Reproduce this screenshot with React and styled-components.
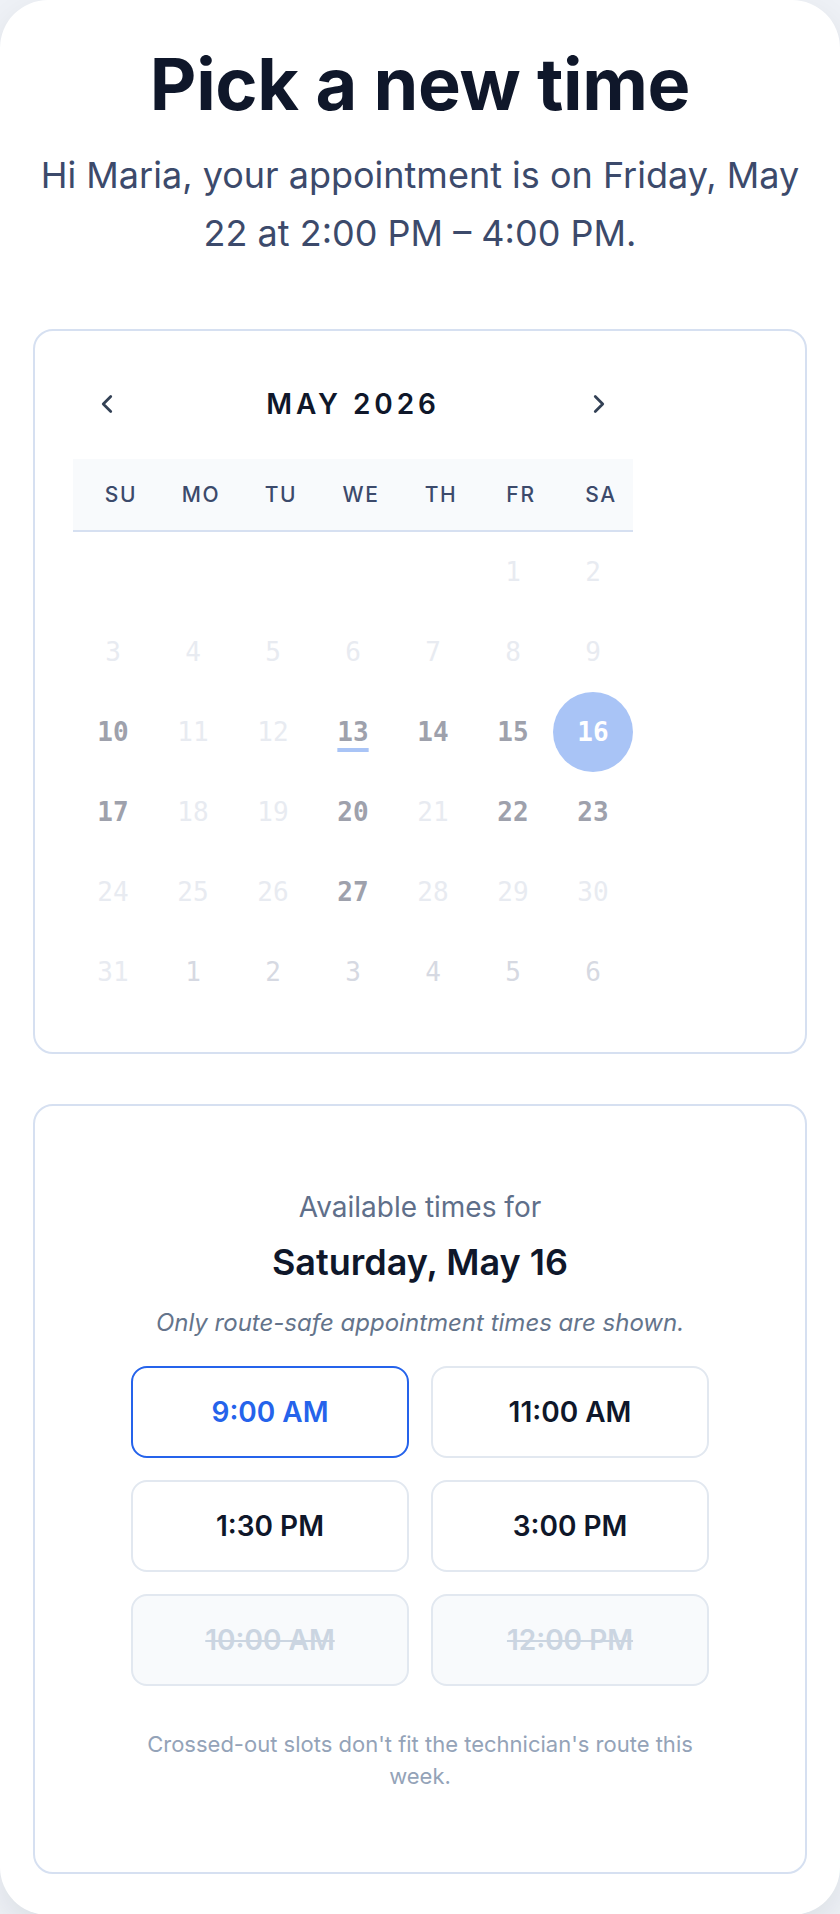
import React from 'react';
import styled, { createGlobalStyle, css } from 'styled-components';
import { ChevronLeft, ChevronRight } from 'lucide-react';

const GlobalStyle = createGlobalStyle`
  * { box-sizing: border-box; }
  body {
    margin: 0;
    background: #eef1f6;
    font-family: "Inter", "Noto Sans", sans-serif;
    -webkit-font-smoothing: antialiased;
  }
`;

const Page = styled.main`
  background: #ffffff;
  border-radius: 48px;
  padding: 44px 33px 41px;
  box-shadow: 0 12px 32px rgba(15, 23, 42, 0.08);
`;

const Title = styled.h1`
  margin: 0;
  text-align: center;
  font-size: 72px;
  line-height: 1.1;
  font-weight: 700;
  letter-spacing: -0.005em;
  color: #0f172a;
`;

const Lead = styled.p`
  margin: 23px 0 0;
  text-align: center;
  font-size: 36px;
  line-height: 58px;
  color: #3c4a6b;
`;

const Panel = styled.section`
  border: 2px solid #d6e0f1;
  border-radius: 20px;
  background: #ffffff;
  margin-top: ${(p) => p.$gap}px;
  padding: ${(p) => p.$pad};
`;

const Calendar = styled.div`
  width: 560px;
`;

const CalendarNav = styled.div`
  height: 70px;
  margin-bottom: 20px;
  display: flex;
  align-items: center;
  justify-content: space-between;
`;

const NavButton = styled.button`
  width: 68px;
  height: 68px;
  border: none;
  background: transparent;
  color: #334155;
  display: flex;
  align-items: center;
  justify-content: center;
  padding: 0;
  cursor: pointer;
`;

const MonthLabel = styled.div`
  font-size: 28px;
  font-weight: 600;
  letter-spacing: 0.14em;
  color: #0f172a;
`;

const WeekdayRow = styled.div`
  display: grid;
  grid-template-columns: repeat(7, 80px);
  height: 73px;
  background: #f8fafc;
  border-bottom: 2px solid #d6e0f1;
`;

const Weekday = styled.div`
  display: flex;
  align-items: center;
  justify-content: center;
  padding-left: 16px;
  font-size: 21px;
  font-weight: 500;
  letter-spacing: 0.08em;
  color: #3c4a6b;
`;

const DayGrid = styled.div`
  display: grid;
  grid-template-columns: repeat(7, 80px);
  grid-auto-rows: 80px;
`;

const dayColors = {
  open: css`
    color: #9ea1ac;
    font-weight: 700;
  `,
  closed: css`
    color: #e8ebf1;
  `,
  next: css`
    color: #d6d9e2;
  `,
  selected: css`
    color: #ffffff;
    font-weight: 700;
    background: #a9c4f6;
    border-radius: 50%;
  `,
  blank: css``,
};

const Day = styled.div`
  display: flex;
  align-items: center;
  justify-content: center;
  font-family: "DejaVu Sans Mono", monospace;
  font-size: 26px;
  ${(p) => dayColors[p.$state]}
  ${(p) =>
    p.$today &&
    css`
      text-decoration: underline;
      text-decoration-color: #a9c4f6;
      text-decoration-thickness: 4px;
      text-underline-offset: 7px;
    `}
`;

const TimesFor = styled.div`
  text-align: center;
  font-size: 28px;
  line-height: 39px;
  color: #5f6f8a;
`;

const DateHeading = styled.h2`
  margin: 13px 0 0;
  text-align: center;
  font-size: 36px;
  line-height: 44px;
  font-weight: 600;
  color: #0f172a;
`;

const Hint = styled.p`
  margin: 22px 0 0;
  text-align: center;
  font-size: 24px;
  line-height: 33px;
  font-style: italic;
  color: #64748b;
`;

const SlotGrid = styled.div`
  width: 578px;
  margin: 27px auto 0;
  display: grid;
  grid-template-columns: 1fr 1fr;
  gap: 22px;
`;

const Slot = styled.button`
  height: 92px;
  border-radius: 16px;
  border: 2px solid #e2e8f0;
  background: #ffffff;
  font-family: inherit;
  font-size: 28px;
  font-weight: 600;
  color: #0f172a;
  cursor: pointer;

  ${(p) =>
    p.$selected &&
    css`
      border-color: #2563eb;
      color: #2563eb;
    `}

  ${(p) =>
    p.disabled &&
    css`
      background: #f8fafc;
      color: #cbd5e1;
      text-decoration: line-through;
      cursor: not-allowed;
    `}
`;

const Note = styled.p`
  width: 578px;
  margin: 42px auto 0;
  text-align: center;
  font-size: 22px;
  line-height: 32px;
  color: #94a3b8;
`;

const weekdays = ['SU', 'MO', 'TU', 'WE', 'TH', 'FR', 'SA'];

const open = [10, 13, 14, 15, 17, 20, 22, 23, 27];

const days = [];
for (let i = 0; i < 5; i++) days.push({ label: '', state: 'blank' });
for (let d = 1; d <= 31; d++) {
  let state = 'closed';
  if (d === 16) state = 'selected';
  else if (open.includes(d)) state = 'open';
  days.push({ label: d, state, today: d === 13 });
}
for (let d = 1; d <= 6; d++) days.push({ label: d, state: 'next' });

const slots = [
  { time: '9:00 AM', selected: true },
  { time: '11:00 AM' },
  { time: '1:30 PM' },
  { time: '3:00 PM' },
  { time: '10:00 AM', off: true },
  { time: '12:00 PM', off: true },
];

export default function App() {
  return (
    <>
      <GlobalStyle />
      <Page>
        <Title>Pick a new time</Title>
        <Lead>
          Hi Maria, your appointment is on Friday, May 22 at 2:00 PM – 4:00 PM.
        </Lead>

        <Panel $gap={67} $pad="38px 38px 40px">
          <Calendar>
            <CalendarNav>
              <NavButton aria-label="Previous month">
                <ChevronLeft size={30} strokeWidth={2.2} />
              </NavButton>
              <MonthLabel>MAY 2026</MonthLabel>
              <NavButton aria-label="Next month">
                <ChevronRight size={30} strokeWidth={2.2} />
              </NavButton>
            </CalendarNav>

            <WeekdayRow>
              {weekdays.map((w) => (
                <Weekday key={w}>{w}</Weekday>
              ))}
            </WeekdayRow>

            <DayGrid>
              {days.map((d, i) => (
                <Day key={i} $state={d.state} $today={d.today}>
                  {d.label}
                </Day>
              ))}
            </DayGrid>
          </Calendar>
        </Panel>

        <Panel $gap={50} $pad="82px 40px 80px">
          <TimesFor>Available times for</TimesFor>
          <DateHeading>Saturday, May 16</DateHeading>
          <Hint>Only route-safe appointment times are shown.</Hint>

          <SlotGrid>
            {slots.map((s) => (
              <Slot key={s.time} $selected={s.selected} disabled={s.off}>
                {s.time}
              </Slot>
            ))}
          </SlotGrid>

          <Note>
            Crossed-out slots don't fit the technician's route this week.
          </Note>
        </Panel>
      </Page>
    </>
  );
}
